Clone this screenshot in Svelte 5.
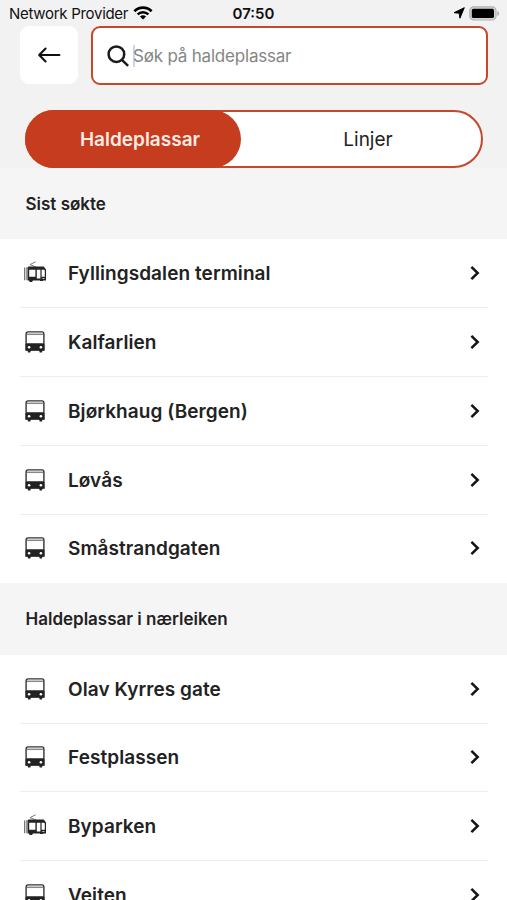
<script lang="ts">
    type Stop = { name: string; type: "bus" | "tram" };
    type Section = { title: string; stops: Stop[] };

    let tab = "stops";
    let query = "";

    const sections: Section[] = [
        {
            title: "Sist søkte",
            stops: [
                { name: "Fyllingsdalen terminal", type: "tram" },
                { name: "Kalfarlien", type: "bus" },
                { name: "Bjørkhaug (Bergen)", type: "bus" },
                { name: "Løvås", type: "bus" },
                { name: "Småstrandgaten", type: "bus" },
            ],
        },
        {
            title: "Haldeplassar i nærleiken",
            stops: [
                { name: "Olav Kyrres gate", type: "bus" },
                { name: "Festplassen", type: "bus" },
                { name: "Byparken", type: "tram" },
                { name: "Veiten", type: "bus" },
            ],
        },
    ];
</script>

<div class="screen">
    <div class="status">
        <div class="carrier">
            <span>Network Provider</span>
            <svg width="20" height="14" viewBox="0 0 20 14" fill="none" stroke="#000">
                <path d="M1.4 5.2a12.2 12.2 0 0 1 17.2 0" stroke-width="2.7" />
                <path d="M4.6 8.4a7.7 7.7 0 0 1 10.8 0" stroke-width="2.5" />
                <path d="M10 13.6 6.9 10.6a4.5 4.5 0 0 1 6.2 0z" fill="#000" stroke="none" />
            </svg>
        </div>
        <div class="clock">07:50</div>
        <div class="power">
            <svg width="12" height="12" viewBox="0 0 12 12">
                <path d="M11.3.7 6.9 11.2 6.2 6.2 1 5.7z" fill="#000" stroke="#000" stroke-width="1" stroke-linejoin="round" />
            </svg>
            <svg width="31" height="15" viewBox="0 0 31 15">
                <rect x=".8" y=".8" width="26.2" height="13.2" rx="4" fill="#d4d4d4" stroke="#b2b2b2" stroke-width="1.2" />
                <rect x="2.8" y="2.8" width="22.2" height="9.2" rx="1.6" fill="#000" />
                <path d="M28.4 5v5c2.2-.7 2.2-4.3 0-5z" fill="#aaa" />
            </svg>
        </div>
    </div>

    <div class="search-row">
        <button class="back" aria-label="Tilbake">
            <svg width="24" height="18" viewBox="0 0 24 18" fill="none" stroke="#111" stroke-width="2.1" stroke-linecap="round" stroke-linejoin="round">
                <path d="M22.4 9H2.6M8.6 2.6 2.2 9l6.4 6.4" />
            </svg>
        </button>
        <label class="search">
            <svg width="22" height="22" viewBox="0 0 22 22" fill="none" stroke="#1a1a1a" stroke-width="2.5">
                <circle cx="9.4" cy="9.2" r="7.8" />
                <path d="m14.9 14.8 6.2 6" />
            </svg>
            <span class="caret"></span>
            <input placeholder="Søk på haldeplassar" bind:value={query} />
        </label>
    </div>

    <div class="tabs">
        <button class:active={tab === "stops"} on:click={() => (tab = "stops")}>Haldeplassar</button>
        <button class:active={tab === "lines"} on:click={() => (tab = "lines")}>Linjer</button>
    </div>

    {#each sections as section}
        <h2>{section.title}</h2>
        <ul>
            {#each section.stops as stop}
                <li>
                    {#if stop.type === "tram"}
                        <svg class="tram" width="24" height="22" viewBox="0 0 24 22">
                            <path d="M11.6.8 6 3.6l6 2.4" fill="none" stroke="#777" stroke-width="1" />
                            <path d="M0 6.4h1.2v12.8H0z" fill="#777" />
                            <path d="M1.8 6.2h1.7v13H1.8z" fill="#999" />
                            <path fill-rule="evenodd" d="M4.4 5.6h15.4l2.2 3v10.8h-3v.6h-3v-.6H9L8 21H5.6L5 19.4H3.6V6.6zM5.2 8.8v7h6.2v-7zM12.8 8.8v8.8h3.6V8.8zM17.6 8.8v7h3.2V9.4l-.6-.6z" fill="#242424" />
                            <path d="M18.4 17.5h2" stroke="#ccc" stroke-width="1" />
                        </svg>
                    {:else}
                        <svg class="bus" width="20" height="22" viewBox="0 0 20 22">
                            <path d="M3 .9h14c1.2 0 1.9.8 1.9 2v16.2H1.1V2.9c0-1.2.7-2 1.9-2z" fill="#fff" stroke="#333" stroke-width="1.4" />
                            <path d="M2 3.3h16" stroke="#888" stroke-width="1.5" />
                            <path d="M.6 13 2 12.2h16l1.4.8v6.4h-1.9l-.6 2.2h-2.2l-.6-2.2H5.9l-.6 2.2H3.1l-.6-2.2H.6z" fill="#222" />
                            <circle cx="4.1" cy="16.2" r="1.3" fill="#fff" />
                            <circle cx="15.9" cy="16.2" r="1.3" fill="#fff" />
                        </svg>
                    {/if}
                    <span class="name">{stop.name}</span>
                    <svg width="10" height="16" viewBox="0 0 10 16" fill="none" stroke="#151515" stroke-width="2.5">
                        <path d="m1.4 1.8 6.3 6.2-6.3 6.2" />
                    </svg>
                </li>
            {/each}
        </ul>
    {/each}
</div>

<style>
    :global(body) {
        background: #fff;
        overflow: hidden;
    }
    .screen {
        height: 900px;
        overflow: hidden;
        background: linear-gradient(#f2f2f2 168px, #fff 168px);
        font-family: Inter, "Liberation Sans", sans-serif;
        color: #222;
    }
    button {
        border: none;
        padding: 0;
        font: inherit;
        color: inherit;
        cursor: pointer;
    }
    .status {
        display: grid;
        grid-template-columns: 1fr auto 1fr;
        align-items: center;
        height: 26px;
        padding: 0 7px 0 9px;
        font-size: 15px;
        color: #111;
    }
    .carrier,
    .power {
        display: flex;
        align-items: center;
    }
    .carrier {
        gap: 5px;
        letter-spacing: -0.29px;
        white-space: nowrap;
    }
    .clock {
        margin-right: 2px;
        font-weight: 600;
    }
    .power {
        justify-content: flex-end;
        gap: 4px;
    }
    .search-row {
        display: flex;
        gap: 13px;
        height: 59px;
        padding: 0 19px 0 20px;
    }
    .back {
        display: flex;
        align-items: center;
        justify-content: center;
        width: 58px;
        height: 58px;
        border-radius: 9px;
        background: #fff;
    }
    .search {
        flex: 1;
        display: flex;
        align-items: center;
        box-sizing: border-box;
        padding-left: 14px;
        border: 2px solid #c8472a;
        border-radius: 9px;
        background: #fff;
    }
    .caret {
        width: 2px;
        height: 22px;
        margin-left: 4px;
        background: #cbd3f6;
    }
    input {
        flex: 1;
        min-width: 0;
        padding: 0;
        border: none;
        outline: none;
        background: none;
        margin-left: -2px;
        font: 17px Inter, "Liberation Sans", sans-serif;
        letter-spacing: -0.2px;
    }
    input::placeholder {
        color: #858585;
    }
    .tabs {
        display: flex;
        box-sizing: border-box;
        height: 58px;
        margin: 25px 24px 0 25px;
        border: 2px solid #c8472a;
        border-radius: 29px;
        background: #fff;
    }
    .tabs button {
        flex: 1;
        padding-left: 14px;
        border-radius: 29px;
        background: none;
        font-size: 19px;
    }
    .tabs .active {
        flex: 0 0 216px;
        margin: -2px 0 -2px -2px;
        background: #c63c1f;
        color: #fbeae4;
        font-weight: 600;
    }
    h2 {
        display: flex;
        align-items: center;
        height: 71.4px;
        margin: 0;
        padding-left: 25.5px;
        background: #f5f5f5;
        font-size: 17px;
        font-weight: 600;
    }
    ul {
        margin: 0;
        padding: 0 19px 0 20px;
        list-style: none;
        background: #fff;
    }
    li {
        display: flex;
        align-items: center;
        box-sizing: border-box;
        height: 68.8px;
        padding: 0 8px 0 4px;
        border-bottom: 1.5px solid #ececec;
    }
    li:last-child {
        border-bottom-color: transparent;
    }
    .tram {
        position: relative;
        top: -1px;
    }
    .bus {
        margin: 0 3px 0 1px;
    }
    .name {
        flex: 1;
        margin-left: 20px;
        padding-top: 1px;
        font-size: 19px;
        font-weight: 600;
        letter-spacing: 0.07px;
    }
</style>
